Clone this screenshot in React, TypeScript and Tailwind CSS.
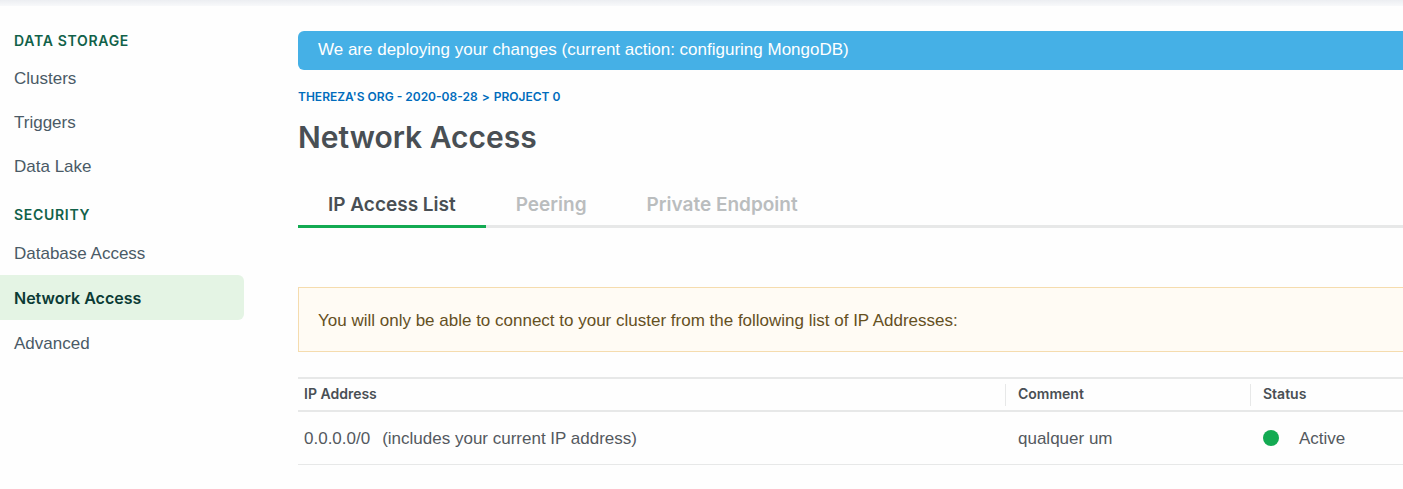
import clsx from 'clsx';

type NavGroup = { title: string; items: string[]; rowClass: string };

const groups: NavGroup[] = [
  { title: 'DATA STORAGE', items: ['Clusters', 'Triggers', 'Data Lake'], rowClass: 'h-11' },
  { title: 'SECURITY', items: ['Database Access', 'Network Access', 'Advanced'], rowClass: 'h-[45px]' },
];

const tabs = ['IP Access List', 'Peering', 'Private Endpoint'];

function Sidebar() {
  return (
    <nav aria-label="Project" className="flex w-[244px] shrink-0 flex-col gap-3 pt-4">
      {groups.map((group) => (
        <section key={group.title}>
          <h2 className="flex h-[30px] items-center pb-px pl-3.5 font-[Inter] text-sm font-semibold tracking-wider text-[#116149]">
            {group.title}
          </h2>
          <ul>
            {group.items.map((item) => {
              const active = item === 'Network Access';
              return (
                <li key={item}>
                  <a
                    href="#"
                    aria-current={active ? 'page' : undefined}
                    className={clsx(
                      'flex items-center rounded-r-md pl-3.5',
                      group.rowClass,
                      active
                        ? 'bg-[#e4f4e4] font-[Inter] text-base font-semibold text-[#0b3b35]'
                        : 'pt-0.5 text-[17px] text-[#4a5a66]',
                    )}
                  >
                    {item}
                  </a>
                </li>
              );
            })}
          </ul>
        </section>
      ))}
    </nav>
  );
}

function AccessTable() {
  return (
    <table className="mt-[25px] w-full table-fixed border-collapse text-left">
      <colgroup>
        <col />
        <col className="w-[245px]" />
        <col className="w-[153px]" />
      </colgroup>
      <thead>
        <tr className="h-[33px] border-y-2 border-[#e7e8e8] font-[Inter] text-sm text-[#494f54]">
          <th scope="col" className="p-0 pb-0.5 pl-1.5 font-semibold">IP Address</th>
          <th scope="col" className="p-0 font-semibold">
            <div className="border-l border-[#e7e8e8] pb-0.5 pl-3">Comment</div>
          </th>
          <th scope="col" className="p-0 font-semibold">
            <div className="border-l border-[#e7e8e8] pb-0.5 pl-3">Status</div>
          </th>
        </tr>
      </thead>
      <tbody>
        <tr className="h-[53px] border-b border-[#e7e8e8] text-[17px] text-[#54595e]">
          <td className="p-0 pt-0.5 pl-1.5">
            <span className="mr-3">0.0.0.0/0</span>
            <span>(includes your current IP address)</span>
          </td>
          <td className="p-0 pt-0.5 pl-[13px]">qualquer um</td>
          <td className="p-0 pl-[13px]">
            <div className="flex items-center gap-5">
              <span className="size-4 rounded-full bg-[#13aa52]" />
              <span className="pt-0.5">Active</span>
            </div>
          </td>
        </tr>
      </tbody>
    </table>
  );
}

export default function App() {
  return (
    <div className="min-h-screen bg-[#fefefe] font-['Liberation_Sans',Arial,sans-serif]">
      <div className="h-1.5 bg-linear-to-b from-[#eceef2] to-[#f8f9fb]" />
      <div className="flex gap-[54px]">
        <div className="pt-1">
          <Sidebar />
        </div>
        <main className="min-w-0 flex-1 pt-[25px]">
          <div role="status" className="flex h-[39px] items-center rounded-l-md bg-[#45b0e6] px-5 pb-0.5 text-[17px] text-white">
            We are deploying your changes (current action: configuring MongoDB)
          </div>
          <nav aria-label="Breadcrumb" className="mt-[18px] flex h-[18px] items-center gap-1 font-[Inter] text-xs font-semibold text-[#006cbc]">
            <a href="#">THEREZA'S ORG - 2020-08-28</a>
            <span>&gt;</span>
            <a href="#">PROJECT 0</a>
          </nav>
          <h1 className="mt-[11px] font-[Inter] text-[30px] leading-10 font-semibold text-[#494f54]">Network Access</h1>
          <div role="tablist" className="mt-[26px] flex h-[45px] border-b-3 border-[#e7e8e8] font-[Inter] text-[19px] font-semibold">
            {tabs.map((tab, i) => (
              <button
                key={tab}
                type="button"
                role="tab"
                aria-selected={i === 0}
                className={clsx(
                  '-mb-[3px] border-b-3 px-[30px] pt-0.5',
                  i === 0 ? 'border-[#13aa52] text-[#494f54]' : 'border-transparent text-[#babdbe]',
                )}
              >
                {tab}
              </button>
            ))}
          </div>
          <p className="mt-[59px] flex h-[65px] items-center border border-r-0 border-[#f5dcae] bg-[#fffbf4] pt-0.5 pl-[19px] text-[17px] text-[#65501f]">
            You will only be able to connect to your cluster from the following list of IP Addresses:
          </p>
          <AccessTable />
        </main>
      </div>
    </div>
  );
}
